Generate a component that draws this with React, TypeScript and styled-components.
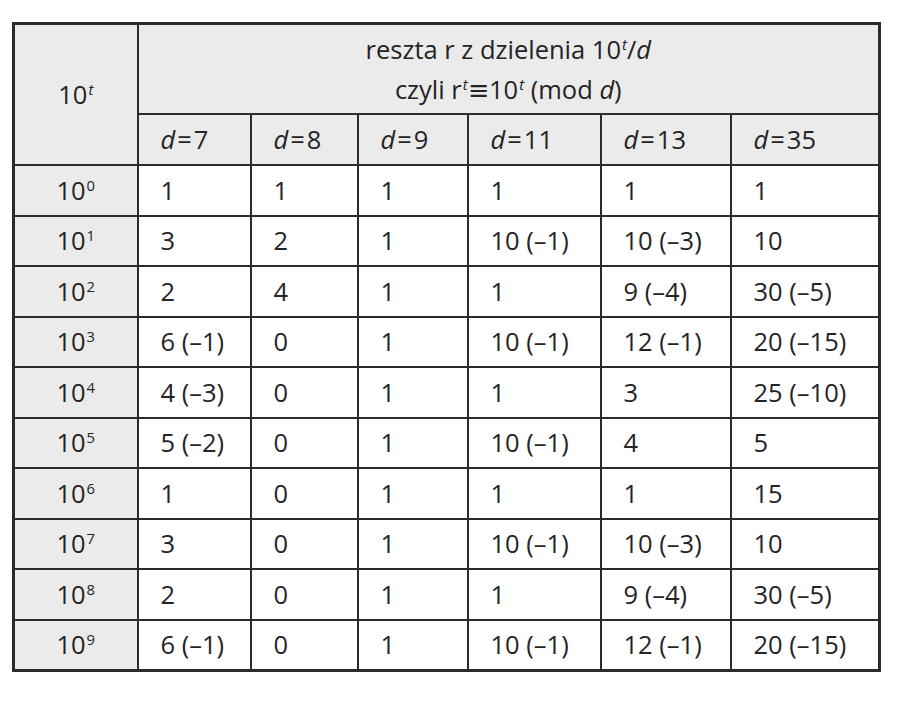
import React from 'react'
import styled, { createGlobalStyle } from 'styled-components'

const GlobalStyle = createGlobalStyle`
  html, body {
    margin: 0;
    padding: 0;
    background: #ffffff;
  }
  body {
    font-family: 'Open Sans', 'DejaVu Sans', sans-serif;
    color: #262324;
  }
`

const Page = styled.div`
  width: 900px;
  height: 701px;
  padding: 22px 0 0 12px;
  box-sizing: border-box;
`

const Table = styled.table`
  width: 866px;
  table-layout: fixed;
  border-collapse: collapse;
  border: 3px solid #2b2b2b;
  font-size: 25.5px;
  line-height: 1.2;
`

const HeadCell = styled.th<{ $tall?: boolean }>`
  background: #ebebeb;
  border: 2px solid #2b2b2b;
  font-weight: 400;
  text-align: center;
  padding: 0;
  height: ${(p) => (p.$tall ? '88px' : '49px')};
`

const Title = styled.div`
  line-height: 36px;
  padding-top: 4px;
`

const ColHead = styled.th`
  background: #ebebeb;
  border: 2px solid #2b2b2b;
  font-weight: 400;
  text-align: left;
  padding: 0 0 0 22px;
  height: 49px;
`

const PowerCell = styled.td`
  background: #ebebeb;
  border: 2px solid #2b2b2b;
  text-align: center;
  height: 48.5px;
  padding: 0;
`

const Cell = styled.td`
  border: 2px solid #2b2b2b;
  text-align: left;
  padding: 0 0 0 22px;
  white-space: nowrap;
`

const Sup = styled.sup`
  font-size: 0.58em;
  vertical-align: 0;
  position: relative;
  top: -0.62em;
  margin-left: 1px;
`

const Var = styled.i`
  font-style: italic;
`

const Eq = styled.span`
  margin: 0 2px;
`

const divisors = [7, 8, 9, 11, 13, 35]
const widths = [124, 113, 107, 110, 133, 130, 149]

const rows: string[][] = [
  ['1', '1', '1', '1', '1', '1'],
  ['3', '2', '1', '10 (–1)', '10 (–3)', '10'],
  ['2', '4', '1', '1', '9 (–4)', '30 (–5)'],
  ['6 (–1)', '0', '1', '10 (–1)', '12 (–1)', '20 (–15)'],
  ['4 (–3)', '0', '1', '1', '3', '25 (–10)'],
  ['5 (–2)', '0', '1', '10 (–1)', '4', '5'],
  ['1', '0', '1', '1', '1', '15'],
  ['3', '0', '1', '10 (–1)', '10 (–3)', '10'],
  ['2', '0', '1', '1', '9 (–4)', '30 (–5)'],
  ['6 (–1)', '0', '1', '10 (–1)', '12 (–1)', '20 (–15)'],
]

const Power: React.FC<{ exp: React.ReactNode }> = ({ exp }) => (
  <>
    10<Sup>{exp}</Sup>
  </>
)

export default function App(): JSX.Element {
  return (
    <Page>
      <GlobalStyle />
      <Table>
        <colgroup>
          {widths.map((w, i) => (
            <col key={i} style={{ width: w }} />
          ))}
        </colgroup>
        <thead>
          <tr>
            <HeadCell rowSpan={2}>
              <Power exp={<Var>t</Var>} />
            </HeadCell>
            <HeadCell colSpan={6} $tall>
              <Title>
                reszta r z dzielenia <Power exp={<Var>t</Var>} />/<Var>d</Var>
                <br />
                czyli r<Sup>
                  <Var>t</Var>
                </Sup>≡<Power exp={<Var>t</Var>} /> (mod <Var>d</Var>)
              </Title>
            </HeadCell>
          </tr>
          <tr>
            {divisors.map((d) => (
              <ColHead key={d}>
                <Var>d</Var>
                <Eq>=</Eq>
                {d}
              </ColHead>
            ))}
          </tr>
        </thead>
        <tbody>
          {rows.map((row, t) => (
            <tr key={t}>
              <PowerCell>
                <Power exp={t} />
              </PowerCell>
              {row.map((v, i) => (
                <Cell key={i}>{v}</Cell>
              ))}
            </tr>
          ))}
        </tbody>
      </Table>
    </Page>
  )
}
